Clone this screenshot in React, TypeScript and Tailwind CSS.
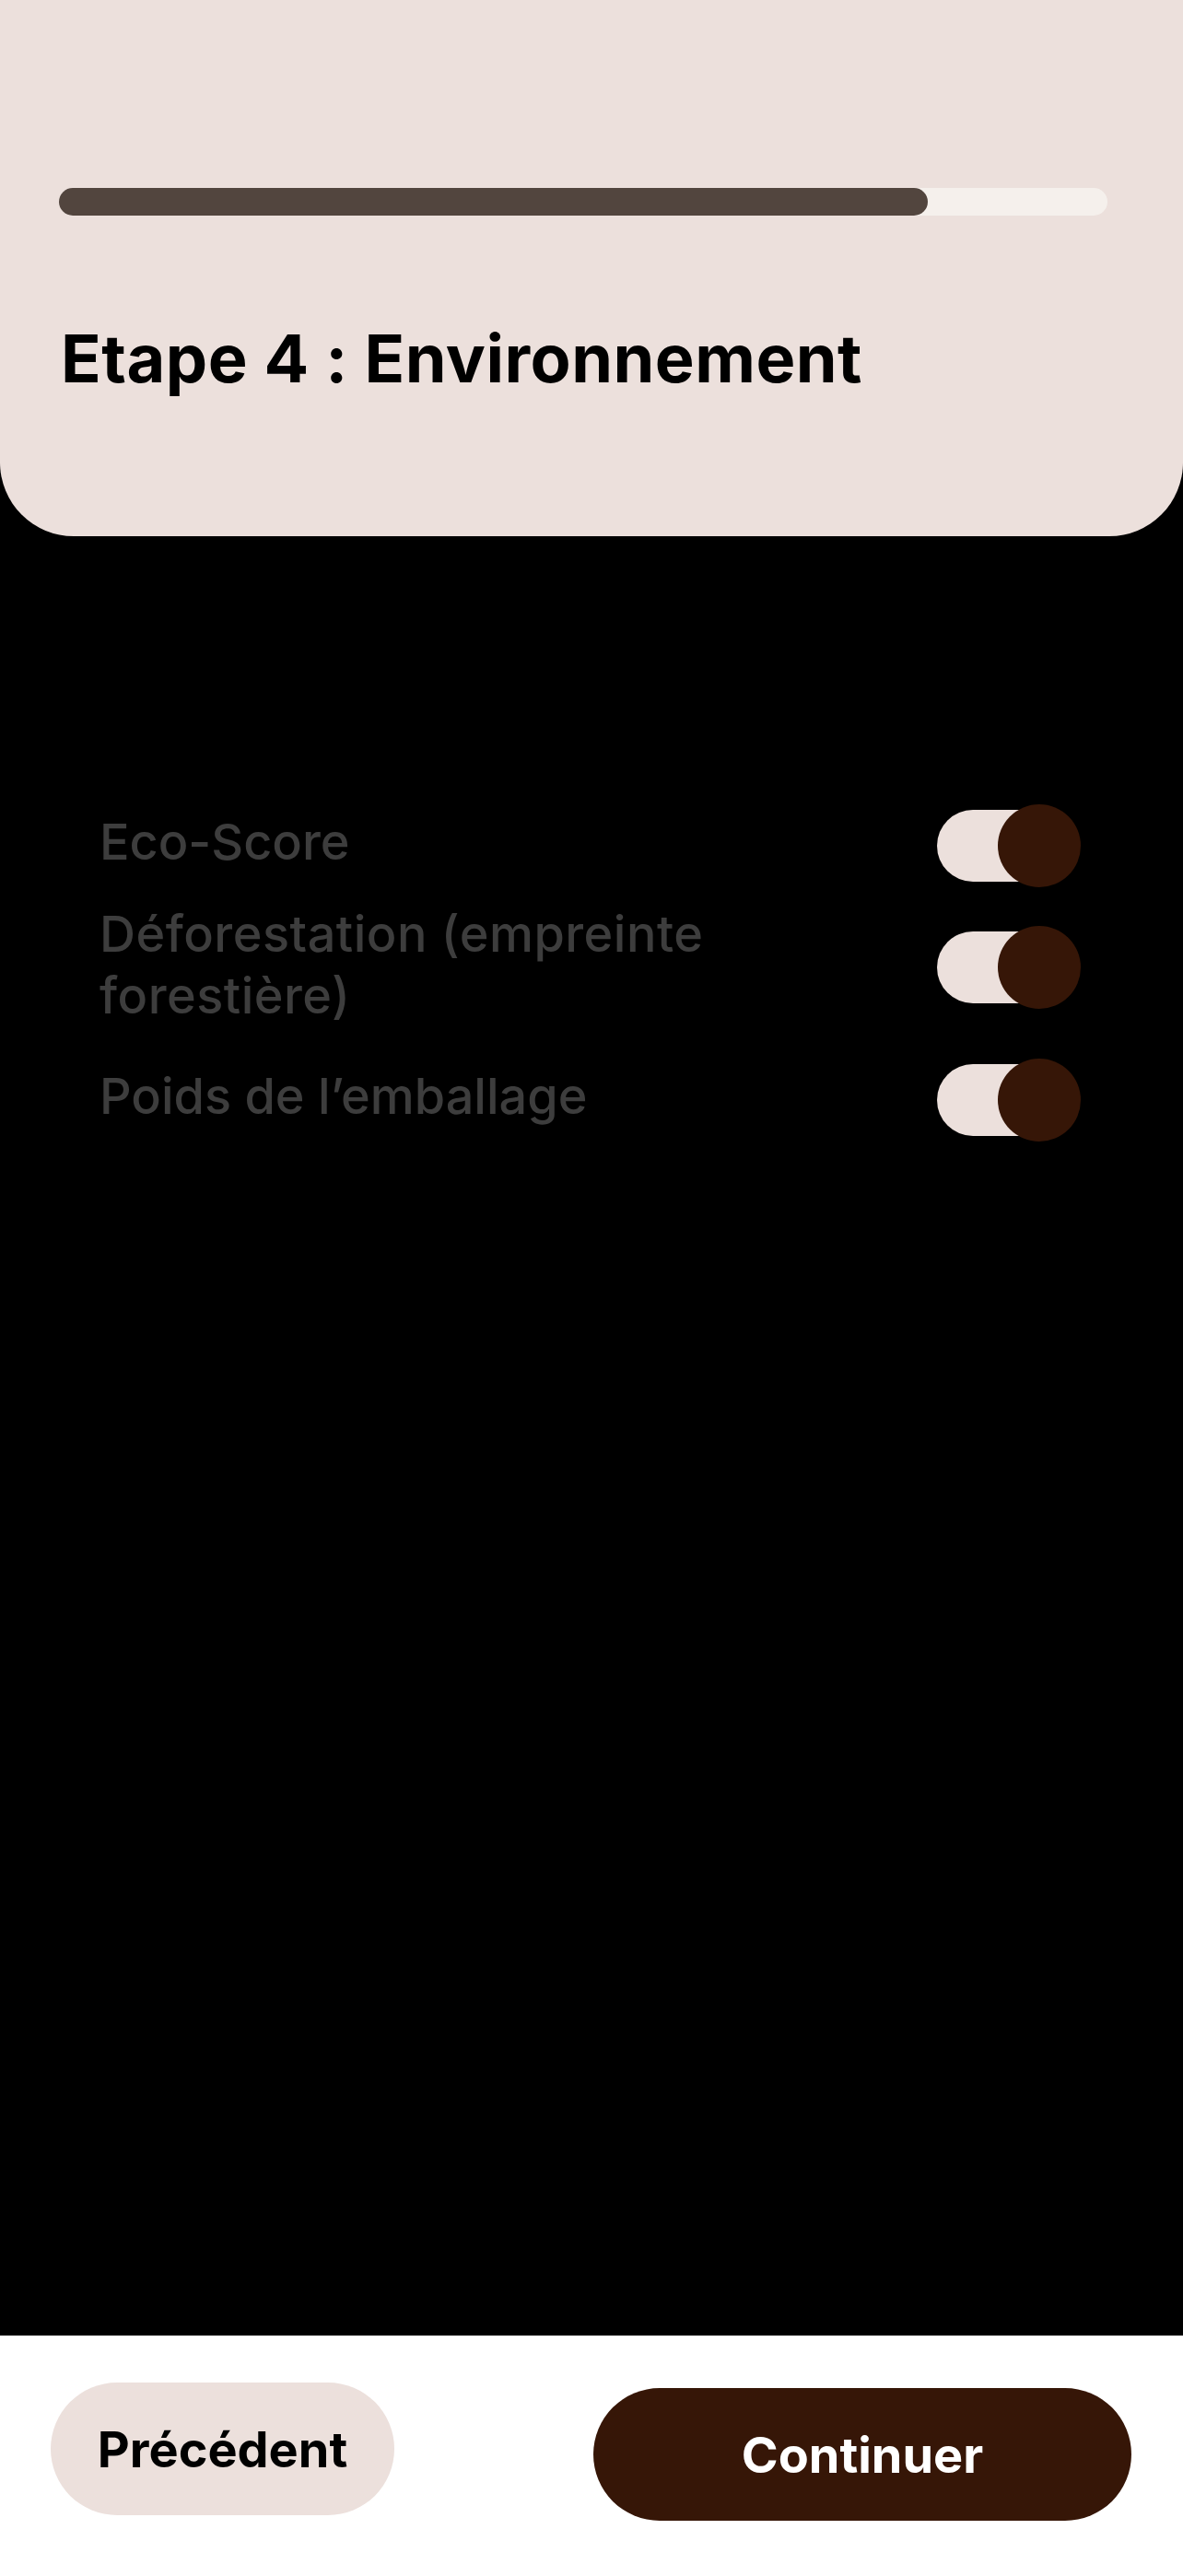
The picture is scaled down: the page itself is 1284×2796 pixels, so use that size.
import React from "react";

function Toggle() {
  return (
    <div className="relative w-[156px] h-[90px] shrink-0">
      <div className="absolute left-0 top-[6px] w-[138px] h-[78px] rounded-full bg-[#ECE0DC]" />
      <div className="absolute right-0 top-0 w-[90px] h-[90px] rounded-full bg-[#361607]" />
    </div>
  );
}

export default function App() {
  const font = { fontFamily: "Inter, 'Open Sans', sans-serif" };
  return (
    <div className="w-[1284px] h-[2796px] flex flex-col bg-black [font-feature-settings:'calt'_0]" style={font}>
      <header className="h-[582px] shrink-0 bg-[#ECE0DC] rounded-b-[80px] pl-[64px] pr-[82px] pt-[204px]">
        <div className="h-[30px] w-[1138px] rounded-full bg-[#F5F0EC]">
          <div className="h-full w-[943px] rounded-full bg-[#52453E]" />
        </div>
        <h1 className="mt-[119px] ml-[2px] text-[72px] leading-none font-bold tracking-[0.5px] text-black">
          Etape 4 : Environnement
        </h1>
      </header>

      <main className="flex-1 flex flex-col pt-[291px] pl-[108px] pr-[111px]">
        <div className="flex items-center justify-between h-[90px]">
          <span className="mb-[9px] text-[54px] leading-[67px] font-medium text-[#3D3D3D]">Eco-Score</span>
          <Toggle />
        </div>
        <div className="flex items-center justify-between h-[134px] mt-[20px]">
          <span className="mb-[7px] max-w-[780px] text-[54px] leading-[67px] font-medium tracking-[0.5px] text-[#3D3D3D]">
            Déforestation (empreinte forestière)
          </span>
          <Toggle />
        </div>
        <div className="flex items-center justify-between h-[90px] mt-[32px]">
          <span className="mb-[9px] text-[54px] leading-[67px] font-medium text-[#3D3D3D]">Poids de l’emballage</span>
          <Toggle />
        </div>
      </main>

      <footer className="h-[261px] shrink-0 bg-white flex items-start justify-between pl-[55px] pr-[56px] pt-[51px]">
        <button className="w-[373px] h-[144px] rounded-full bg-[#ECE0DC] text-black text-[54px] font-bold flex items-center justify-center">
          Précédent
        </button>
        <button className="mt-[6px] w-[584px] h-[144px] rounded-full bg-[#361607] text-white text-[54px] font-bold flex items-center justify-center">
          Continuer
        </button>
      </footer>
    </div>
  );
}
